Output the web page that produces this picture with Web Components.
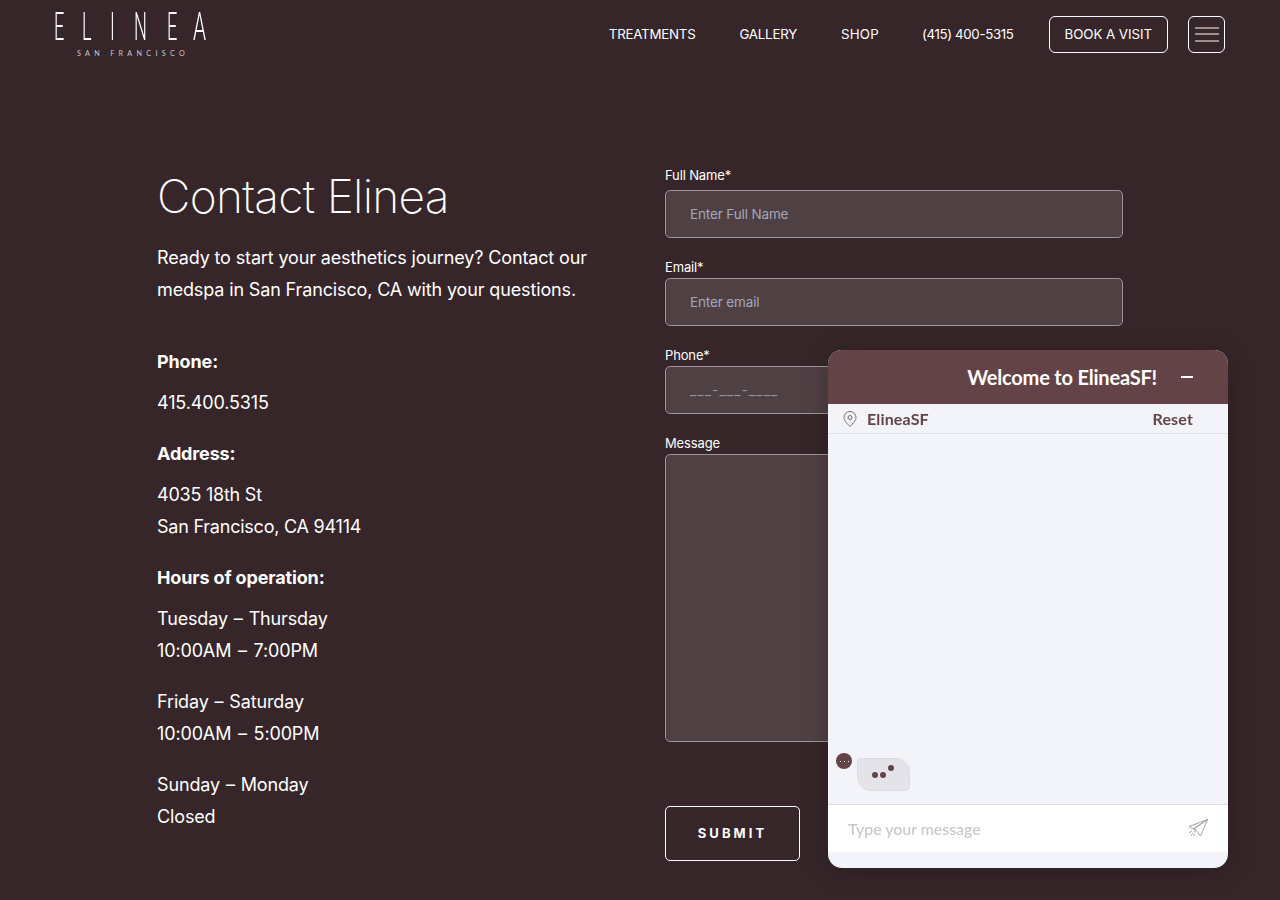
<!DOCTYPE html>
<html lang="en"><head><meta charset="utf-8"><title>Contact Elinea</title>
<style>
html,body{margin:0;height:900px;overflow:hidden;background:#36262a;color:#fff;font-family:"Inter","Noto Sans",sans-serif}
</style></head><body>
<site-header></site-header>
<contact-page></contact-page>
<chat-widget></chat-widget>
<script>
function el(name, html){
  customElements.define(name, class extends HTMLElement{
    constructor(){super();this.attachShadow({mode:'open'}).innerHTML=html;}
  });
}
el('site-logo',`<style>
:host{display:block;width:154px;height:46px;color:#fff}
.w{font:300 39.4px/28px Roboto,sans-serif;display:grid;grid-template-columns:28px 28px 24px 33px 26px 13px;width:152px;height:28px;margin-top:13px;will-change:transform}
.w span{display:block;transform:scaleX(.46);transform-origin:0 50%;margin-left:-1px}
.w span:last-child{transform:scaleX(.53)}
.s{font:400 7.2px/9px Lato,sans-serif;letter-spacing:4.3px;color:#cfc8ca;margin:8px 0 0 22px;white-space:nowrap}
</style><div class="w"><span>E</span><span>L</span><span>I</span><span>N</span><span>E</span><span>A</span></div><div class="s">SAN FRANCISCO</div>`);
el('site-header',`<style>
:host{display:flex;height:68px;box-sizing:border-box;padding:0 55px;justify-content:space-between;font:400 13.3px/17px Inter,sans-serif;letter-spacing:-.22px;color:#fff}
nav{display:flex;align-items:center;height:68px}
a{color:#fff;white-space:nowrap}
.t{margin-right:44px}
.s{letter-spacing:.2px;margin-right:43px}
.p{margin-right:35px;letter-spacing:-.35px}
.b{border:1px solid #fff;border-radius:6px;height:37px;box-sizing:border-box;display:flex;align-items:center;padding:0 15px;margin:0 20px 0 0;letter-spacing:-.05px}
.h{border:1px solid #fff;border-radius:6px;width:37px;height:37px;box-sizing:border-box;display:flex;flex-direction:column;justify-content:center;gap:4.5px;align-items:center}
.h i{display:block;width:24px;height:2px;background:#9b8f92}
</style><site-logo></site-logo><nav><a class="t">TREATMENTS</a><a class="t">GALLERY</a><a class="s">SHOP</a><a class="p">(415) 400-5315</a><a class="b">BOOK A VISIT</a><div class="h"><i></i><i></i><i></i></div></nav>`);
el('info-block',`<style>
:host{display:block;font:400 18px/31.5px Inter,sans-serif;letter-spacing:-.14px}
h3{font:700 18px/32px Inter,sans-serif;margin:0 0 9px;letter-spacing:-.14px}
::slotted(p){margin:0 0 20px}
</style><h3><slot name="t"></slot></h3><slot></slot>`);
el('form-field',`<style>
:host{display:block;margin-bottom:21px}
label{display:block;font:400 13px/17px Inter,sans-serif;color:#fff;margin-bottom:2px;height:17px}
:host([first]) label{margin-bottom:6px}
.i{box-sizing:border-box;height:48px;background:#4f4044;border:1px solid #9d9497;border-radius:5px;padding:0 24px;display:flex;align-items:center;font:400 13.5px/17px Inter,sans-serif;color:#a3a8ba}
:host([tall]) .i{height:288px}
</style><label><slot name="l"></slot></label><div class="i"><slot></slot></div>`);
el('contact-page',`<style>
:host{display:grid;grid-template-columns:508px 458px;margin-left:157px;padding-top:98px;font:400 18px/32px Inter,sans-serif;letter-spacing:-.14px}
h1{font:150 46px/60px Inter,sans-serif;margin:0 0 16px;letter-spacing:-.7px}
.lead{margin:0 0 39.700px;width:450px}
p{margin:0 0 20px}
.a{letter-spacing:-.23px}
.d{word-spacing:1px}
.d span{word-spacing:1.800px}
.sub{display:inline-flex;align-items:center;justify-content:center;width:135px;height:55px;box-sizing:border-box;border:1px solid #fff;border-radius:5px;font:700 13px/17px Inter,sans-serif;letter-spacing:3.100px;margin-top:43px}
form{padding-top:1px}
.ph{letter-spacing:1.200px;color:#98939f}
</style>
<div><h1>Contact Elinea</h1><p class="lead">Ready to start your aesthetics journey? Contact our medspa in San Francisco, CA with your questions.</p>
<info-block><span slot="t">Phone:</span><p>415.400.5315</p></info-block>
<info-block><span slot="t">Address:</span><p class="a">4035 18th St<br>San Francisco, CA 94114</p></info-block>
<info-block><span slot="t">Hours of operation:</span><p class="d">Tuesday – Thursday<br><span>10:00AM – 7:00PM</span></p><p class="d">Friday – Saturday<br><span>10:00AM – 5:00PM</span></p><p class="d">Sunday – Monday<br>Closed</p></info-block></div>
<form><form-field first><span slot="l">Full Name*</span>Enter Full Name</form-field>
<form-field><span slot="l">Email*</span>Enter email</form-field>
<form-field><span slot="l">Phone*</span><span class="ph">___-___-____</span></form-field>
<form-field tall><span slot="l">Message</span></form-field>
<div class="sub">SUBMIT</div></form>`);
el('chat-widget',`<style>
:host{position:fixed;left:828px;top:350px;width:400px;height:518px;border-radius:14px;overflow:hidden;background:#f3f4fa;display:flex;flex-direction:column;font-family:Lato,sans-serif;box-shadow:0 4px 24px rgba(0,0,0,.25)}
.hd{height:54px;background:#644347;color:#fff;display:flex;align-items:center;justify-content:flex-end;padding-right:35px;font:700 20px/24px Lato,sans-serif;letter-spacing:-.2px;flex:none}
.hd i{display:block;width:12px;height:2px;background:#fff;margin-left:24px}
.bar{height:30px;box-sizing:border-box;border-bottom:1px solid #dfe0e6;display:flex;align-items:center;padding:0 35px 0 14px;color:#644347;font:700 16px/20px Lato,sans-serif;letter-spacing:.15px;flex:none}
.bar svg{margin-right:9px}
.bar b{flex:1;font-weight:700}
.msgs{flex:1;display:flex;align-items:flex-end;padding:0 0 13px 8px}
.av{width:16px;height:16px;border-radius:50%;background:#644347;margin:0 5px 22px 0;display:flex;gap:3px;align-items:center;justify-content:center}
.av i{width:1px;height:1px;background:#fff}
.bub{width:53px;height:33px;box-sizing:border-box;background:#e4e3e9;border:1px solid #dcdbe1;border-radius:3px 14px 5px 14px;position:relative}
.bub i{position:absolute;width:6px;height:6px;border-radius:50%;background:#644347}
.in{height:48px;box-sizing:border-box;background:#fff;border-top:1px solid #dfe0e6;display:flex;align-items:center;justify-content:space-between;padding:0 20px;color:#c8c8cc;font:500 16px/20px Lato,sans-serif;letter-spacing:-.05px;flex:none}
.ft{height:16px;flex:none}
</style>
<div class="hd">Welcome to ElineaSF!<i></i></div>
<div class="bar"><svg width="16" height="18" viewBox="0 0 16 18" fill="none" stroke="#7a6a6e" stroke-width="1"><path d="M8 16.500C4.500 13 2 10.500 2 7.500a6 6 0 0 1 12 0c0 3-2.500 5.500-6 9z"/><circle cx="8" cy="7.500" r="2"/></svg><b>ElineaSF</b><span>Reset</span></div>
<div class="msgs"><div class="av"><i></i><i></i><i></i></div><div class="bub"><i style="left:14px;top:13px"></i><i style="left:22px;top:13px"></i><i style="left:30px;top:6px"></i></div></div>
<div class="in"><span>Type your message</span><svg width="20" height="19" viewBox="0 0 20 19" fill="none" stroke="#9a9a9a" stroke-width=".9"><path d="M19.500.5 1 7.500l4.500 2.500zM19.500.5 5.500 10l2 .5 5 6.500zM7.500 10.500l-1 3M4 12 1 14M5 14l-2.500 3M7 15l-1.500 2"/></svg></div>
<div class="ft"></div>`);
</script>
</body></html>
